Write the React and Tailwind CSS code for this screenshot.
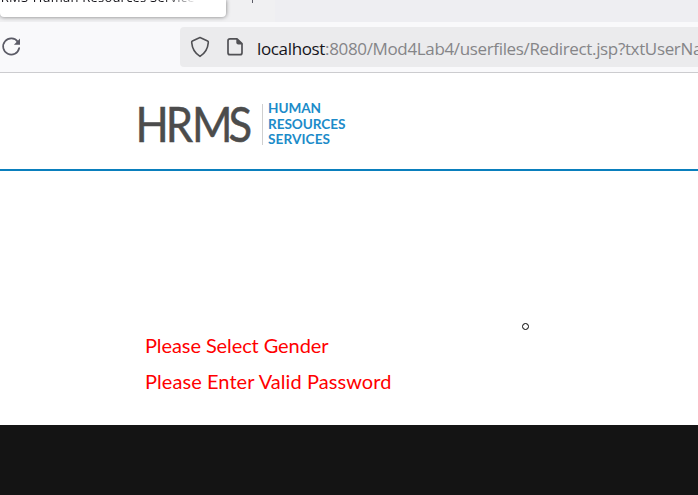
function TabStrip() {
  return (
    <div className="flex h-[22px] w-full overflow-hidden bg-[#eeeef2]">
      <div className="flex h-full w-[275px] bg-[#f0f0f2]">
        <div className="relative h-[17px] w-[226px] rounded-b bg-white shadow-[0_0_4px_rgba(0,0,0,0.5)]">
          <div className="-mt-[12px] -ml-[9px] h-[18px] w-[206px] overflow-hidden whitespace-nowrap font-['Open_Sans',sans-serif] text-[13px] leading-[18px] tracking-[0.22px] text-[#15141a] [mask-image:linear-gradient(to_right,black_84%,transparent)]">
            HRMS-Human Resources Service
          </div>
        </div>
        <div className="ml-[26px] h-[3px] w-px bg-[#5b5b66]" />
      </div>
    </div>
  );
}

function AddressBar() {
  return (
    <div className="flex h-[51px] w-full items-start border-b border-[#cccccf] bg-[#f9f9fb] pt-[5px]">
      <svg className="mt-[10px] h-[20px] w-[21px] shrink-0" viewBox="0 0 21 20" fill="none">
        <path d="M17.9 4.9A8.1 8.1 0 1 0 19.2 11" stroke="#5b5b66" strokeWidth="1.7" strokeLinecap="round" />
        <path d="M20 1.6v6.2h-6.1z" fill="#5b5b66" />
      </svg>
      <div className="ml-[159px] flex h-10 flex-1 items-center overflow-hidden rounded-l bg-[#ebebed]">
        <svg className="ml-[10px] h-[22px] w-5 shrink-0" viewBox="0 0 20 22" fill="none" stroke="#515155" strokeWidth="1.6" strokeLinejoin="round">
          <path d="M10 1.6 17.6 5Q18.5 5.5 18.3 6.6C17.8 12.6 15.5 17 10 20.4 4.5 17 2.2 12.6 1.7 6.6Q1.5 5.5 2.4 5Z" />
        </svg>
        <svg className="ml-[16px] h-[20px] w-[18px] shrink-0" viewBox="0 0 18 20" fill="none">
          <path d="M11 1.9H4Q2 1.9 2 3.9V15.7Q2 17.7 4 17.7H14Q16 17.7 16 15.7V6.7Z" stroke="#515155" strokeWidth="1.7" strokeLinejoin="round" />
          <path d="M10.3 1.3 16.6 7.4h-4.3q-2 0-2-2z" fill="#515155" />
        </svg>
        <div className="ml-[13px] mt-[3px] whitespace-nowrap font-['Open_Sans',sans-serif] text-[17px] leading-6 tracking-[-0.35px] text-[#858588]">
          <span className="text-[#15141a]">localhost</span>:8080/Mod4Lab4/userfiles/Redirect.jsp?txtUserName=
        </div>
      </div>
    </div>
  );
}

function Logo() {
  return (
    <svg className="ml-[130px] h-[50px] w-[220px] font-['Lato',sans-serif]" viewBox="130 100 220 50">
      <text transform="translate(135.6 142) scale(.89 1)" x="0 34 63.5 104.5" y="0" fontSize="49" fill="#4c4c4c" stroke="#4c4c4c" strokeWidth=".5">HRMS</text>
      <path d="M262.5 104V145" stroke="#cfcfcf" />
      <g fill="#1c8bc9" fontSize="13.6" fontWeight="700">
        <text x="268" y="113" textLength="53">HUMAN</text>
        <text x="268" y="128.5" textLength="77.5">RESOURCES</text>
        <text x="268" y="144" textLength="62">SERVICES</text>
      </g>
    </svg>
  );
}

export default function App() {
  return (
    <div className="relative flex h-[495px] w-full flex-col overflow-hidden bg-white">
      <TabStrip />
      <AddressBar />
      <header className="h-[98px] border-b-2 border-[#0a7fbd] pt-[27px]">
        <Logo />
      </header>
      <main className="h-[254px] pt-[156px] pl-[145px] font-['Lato',sans-serif] text-[20px] leading-9 text-[#ff0000]">
        <p className="tracking-[-0.09px]">Please Select Gender</p>
        <p className="tracking-[0.07px]">Please Enter Valid Password</p>
      </main>
      <footer className="flex-1 bg-[#141414]" />
      <div className="absolute left-[522px] top-[323px] h-[7px] w-[7px] rounded-full border border-black" />
    </div>
  );
}
